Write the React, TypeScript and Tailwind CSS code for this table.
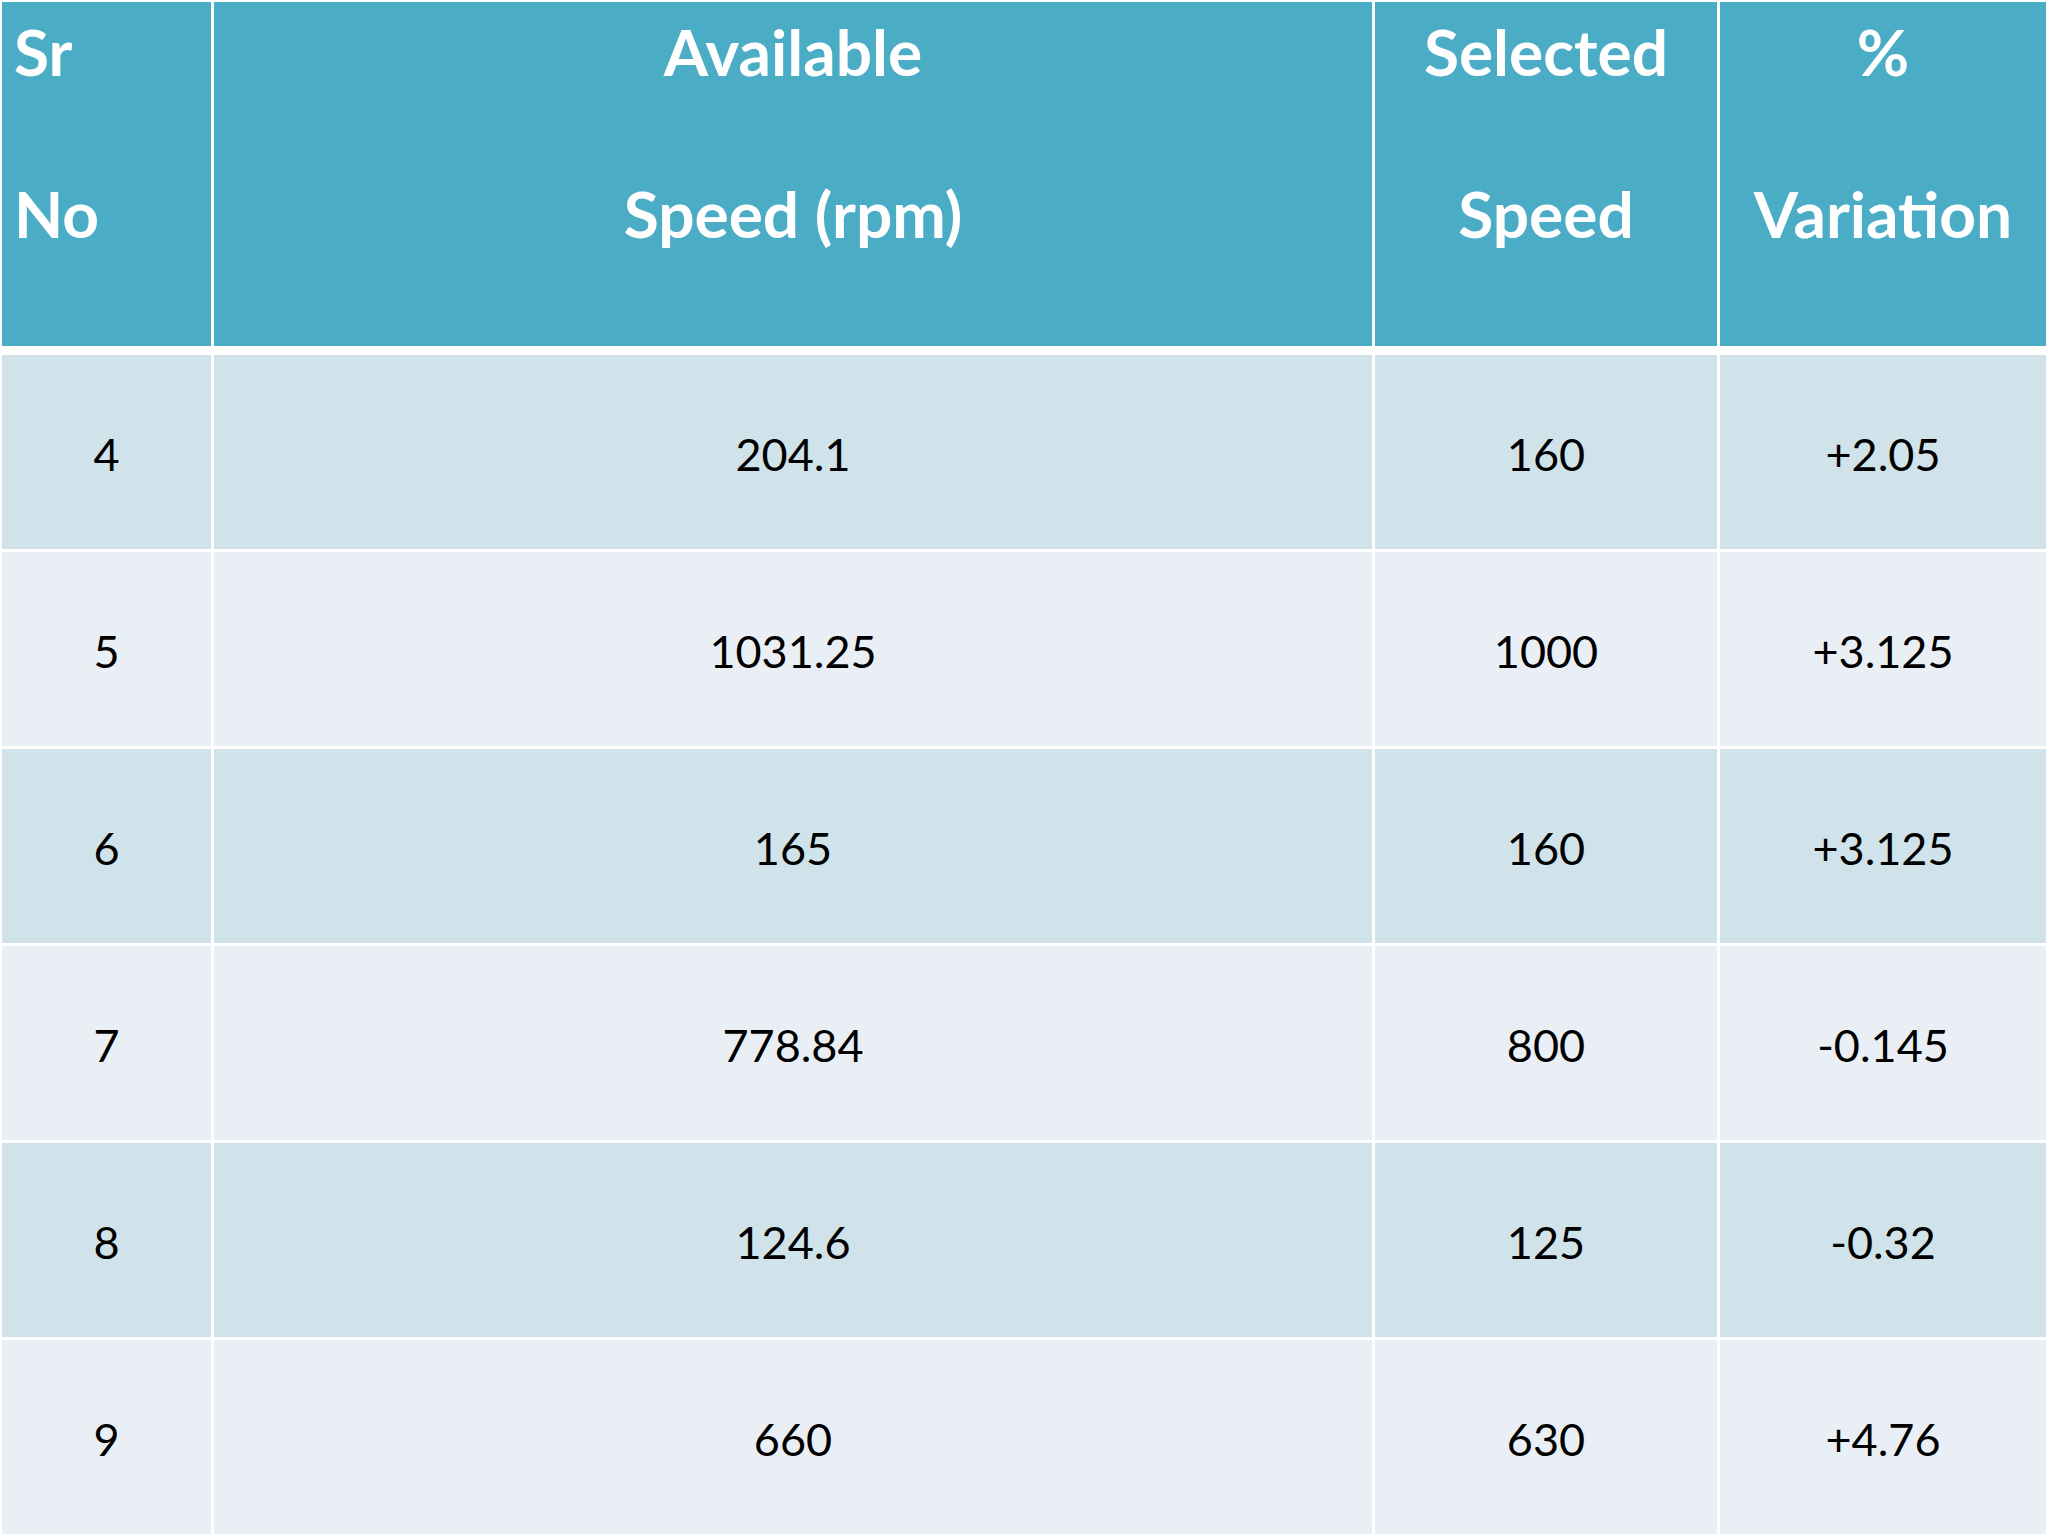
import React from "react";

const rows: [string, string, string, string][] = [
  ["4", "204.1", "160", "+2.05"],
  ["5", "1031.25", "1000", "+3.125"],
  ["6", "165", "160", "+3.125"],
  ["7", "778.84", "800", "-0.145"],
  ["8", "124.6", "125", "-0.32"],
  ["9", "660", "630", "+4.76"],
];

const headers: [string, string][] = [
  ["Sr", "No"],
  ["Available", "Speed (rpm)"],
  ["Selected", "Speed"],
  ["%", "Variation"],
];

export default function App() {
  return (
    <div
      className="w-[2048px] h-[1536px] bg-white p-[2px] flex flex-col overflow-hidden"
      style={{ fontFamily: "Lato, 'Open Sans', 'Liberation Sans', sans-serif" }}
    >
      <div className="grid grid-cols-[209px_1158px_342px_1fr] gap-x-[3px] h-[344px] shrink-0">
        {headers.map((h, i) => (
          <div
            key={i}
            className={`bg-[#4bacc6] text-white font-bold text-[64px] flex flex-col pt-[18px] gap-[98px] ${
              i === 0 ? "items-start pl-[12px]" : "items-center"
            }`}
          >
            <div className="leading-none">{h[0]}</div>
            <div className="leading-none">{h[1]}</div>
          </div>
        ))}
      </div>
      <div className="mt-[9px] flex-1 grid grid-cols-[209px_1158px_342px_1fr] grid-rows-6 gap-x-[3px] gap-y-[3px]">
        {rows.map((r, ri) =>
          r.map((c, ci) => (
            <div
              key={`${ri}-${ci}`}
              className={`${
                ri % 2 === 0 ? "bg-[#d0e3ea]" : "bg-[#e9eff5]"
              } flex items-center justify-center text-black text-[45px] pt-[4px]`}
            >
              <span className="leading-none">{c}</span>
            </div>
          ))
        )}
      </div>
    </div>
  );
}
